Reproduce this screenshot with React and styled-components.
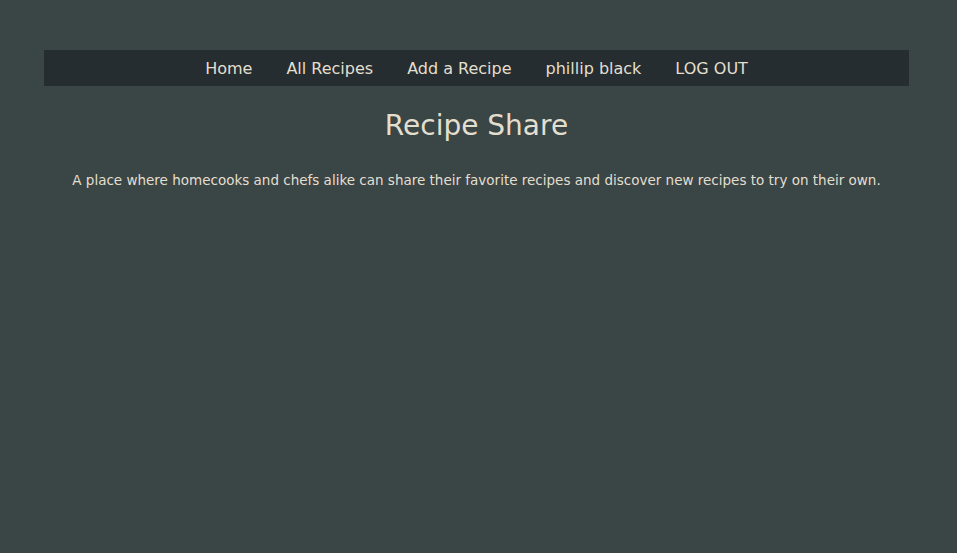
import styled, { createGlobalStyle } from 'styled-components';

const GlobalStyle = createGlobalStyle`
  html, body {
    margin: 0;
    padding: 0;
    background: #3a4546;
    font-family: "DejaVu Sans", Verdana, sans-serif;
    color: #e3dfcf;
  }
`;

const Page = styled.div`
  min-height: 553px;
  padding: 50px 48px 0 44px;
  box-sizing: border-box;
`;

const NavBar = styled.nav`
  height: 36px;
  background: #262d30;
  display: flex;
  align-items: center;
  justify-content: center;
  gap: 34px;
`;

const NavLink = styled.a`
  font-size: 16px;
  color: #e3dfcf;
  text-decoration: none;
  cursor: pointer;
`;

const Title = styled.h1`
  margin: 23px 0 0;
  text-align: center;
  font-size: 28px;
  font-weight: normal;
`;

const Tagline = styled.p`
  margin: 30px 0 0;
  text-align: center;
  font-size: 13.5px;
`;

const links = ['Home', 'All Recipes', 'Add a Recipe', 'phillip black', 'LOG OUT'];

export default function App() {
  return (
    <>
      <GlobalStyle />
      <Page>
        <NavBar>
          {links.map((l) => (
            <NavLink key={l}>{l}</NavLink>
          ))}
        </NavBar>
        <Title>Recipe Share</Title>
        <Tagline>
          A place where homecooks and chefs alike can share their favorite recipes and discover new recipes to try on their own.
        </Tagline>
      </Page>
    </>
  );
}
